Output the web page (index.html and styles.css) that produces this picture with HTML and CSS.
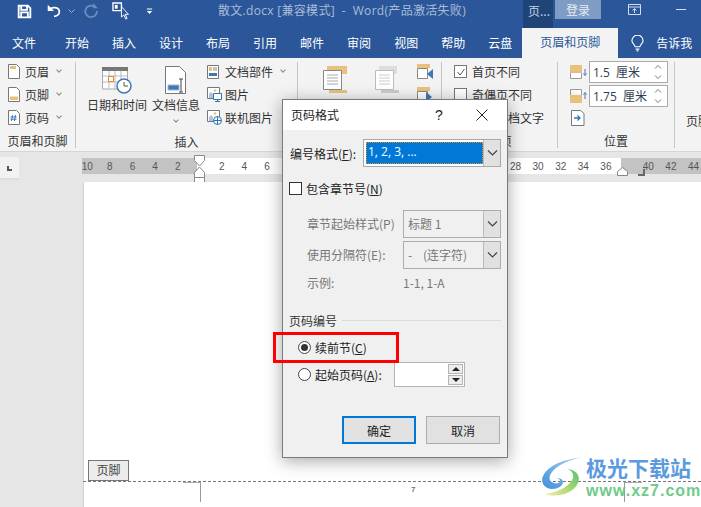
FILE: index.html
```html
<!DOCTYPE html>
<html lang="zh">
<head>
<meta charset="utf-8">
<title>散文.docx</title>
<link rel="stylesheet" href="styles.css">
</head>
<body>
<div class="app">
  <header class="titlebar">
    <div class="qat">
      <svg class="qi" width="15" height="15" viewBox="0 0 18 18"><path d="M2 2h11l3 3v11H2z M5 2v5h7V2 M5 16v-6h8v6" fill="none" stroke="#fff" stroke-width="2.200"/></svg>
      <svg class="qi qi-undo" width="16" height="16" viewBox="0 0 18 18"><path d="M3 8c3-4 12-4 12 2 0 3-3 5-6 5" fill="none" stroke="#fff" stroke-width="2"/><path d="M2 2v7h7z" fill="#fff"/></svg>
      <svg class="qchev" width="7" height="5" viewBox="0 0 7 5"><path d="M.5.500l3 3 3-3" fill="none" stroke="#9db4d4"/></svg>
      <svg class="qi qi-redo" width="15" height="16" viewBox="0 0 16 18"><path d="M11 4a6.500 6.500 0 1 0 3 5" fill="none" stroke="#6f8db8" stroke-width="2"/><path d="M10 0v6h5z" fill="#6f8db8"/></svg>
      <svg class="qi qi-touch" width="17" height="19" viewBox="0 0 18 20"><path d="M1 1h9v8H1z" fill="none" stroke="#fff" stroke-width="1.400"/><path d="M3 3h3v4H3z" fill="#fff"/><path d="M10 5v11l2.500-2.500 2 4.500 1.500-.7-2-4.300h3.500z" fill="#2b579a" stroke="#fff"/></svg>
      <svg class="qi qi-more" width="7" height="8" viewBox="0 0 8 8"><path d="M1 1h6v1.200H1z M1 4h6L4 7.500z" fill="#fff"/></svg>
    </div>
    <div class="doc-title">散文.docx [兼容模式]  -  Word(产品激活失败)</div>
    <div class="title-tab">页...</div>
    <div class="login">登录</div>
    <div class="winctl">
      <svg width="13" height="11" viewBox="0 0 13 11"><path d="M.5.500h12v10H.5z M.5 3h12 M6.500 9V5 M4.500 6.500l2-2 2 2" fill="none" stroke="#d5deec"/></svg>
      <span class="minimize"></span>
    </div>
  </header>

  <nav class="tabs">
    <span>文件</span><span class="tab-second">开始</span><span>插入</span><span>设计</span><span>布局</span><span>引用</span><span>邮件</span><span>审阅</span><span>视图</span><span>帮助</span><span>云盘</span>
    <span class="tab-active">页眉和页脚</span>
    <svg class="bulb" width="13" height="17" viewBox="0 0 14 18"><path d="M4.500 12.500C4 9.500 1 9 1 6a6 6 0 0 1 12 0c0 3-3 3.500-3.500 6.500z M5 15h4 M6 17h2" fill="none" stroke="#fff" stroke-width="1.200"/></svg>
    <span class="tell">告诉我</span>
  </nav>

  <section class="ribbon">
    <div class="group g1">
      <div class="stack">
        <div class="ri"><svg width="12" height="15" viewBox="0 0 12 15"><path d="M.5.500h8l3 3v11H.5z" fill="#fff" stroke="#777"/><path d="M2 2h6v3H2z" fill="#e8c27c"/></svg><span>页眉</span><i class="chev"></i></div>
        <div class="ri"><svg width="12" height="15" viewBox="0 0 12 15"><path d="M.5.500h8l3 3v11H.5z" fill="#fff" stroke="#777"/><path d="M2 9.500h8V13H2z" fill="#e8c27c"/></svg><span>页脚</span><i class="chev"></i></div>
        <div class="ri"><svg width="12" height="15" viewBox="0 0 12 15"><path d="M.5.500h8l3 3v11H.5z" fill="#fff" stroke="#777"/><path d="M4.500 5L3.500 11M7.500 5L6.500 11M2.500 7h6M2.500 9.200h6" stroke="#3f78b5" fill="none"/></svg><span>页码</span><i class="chev"></i></div>
      </div>
      <div class="glabel">页眉和页脚</div>
    </div>
    <div class="group g2">
      <div class="g2-body">
        <div class="big big-date">
          <svg width="30" height="28" viewBox="0 0 30 28"><path d="M.5 1h25v21H.5z" fill="#fff" stroke="#aaa"/><path d="M0 0h26v4H0z" fill="#777"/><path d="M7 4v18M13 4v18M19 4v18M1 9h24M1 15h24" stroke="#bbb"/><path d="M6.500 9.500h5v5h-5z" fill="#fff" stroke="#e8872c"/><circle cx="22" cy="19" r="7" fill="#fff" stroke="#3f78b5" stroke-width="1.500"/><path d="M22 15v4h4" fill="none" stroke="#555"/></svg>
          <span>日期和时间</span>
        </div>
        <div class="big big-info">
          <svg width="22" height="29" viewBox="0 0 22 29"><path d="M.5.500h14l6 6v21H.5z" fill="#fff" stroke="#777"/><path d="M3 19h11v5H3z" fill="#3f78b5" stroke="#9cb6d6"/><path d="M14 13h4M14 26h4M16 13v13" stroke="#444" fill="none"/></svg>
          <span>文档信息</span>
          <i class="chev"></i>
        </div>
        <div class="stack stack-ins">
          <div class="ri"><svg width="12" height="14" viewBox="0 0 12 14"><path d="M.5.500h11v13H.5z" fill="#fff" stroke="#777"/><path d="M2 2h3v4H2z" fill="#e8c27c"/><path d="M2 8h8v3H2z" fill="#3f78b5"/><path d="M6 3h4M6 5h4" stroke="#888"/></svg><span>文档部件</span><i class="chev"></i></div>
          <div class="ri"><svg width="15" height="15" viewBox="0 0 15 15"><path d="M.5.500h12v11H.5z" fill="#fff" stroke="#777"/><circle cx="8" cy="3.500" r="1.300" fill="#e8c27c"/><path d="M2 11V7l2-2 2 2v4z" fill="#a9c3e0"/><path d="M6.500 6.500h8v6h-8z" fill="#fff" stroke="#2f74b5"/><path d="M10.500 12.500v2M8 14.500h5" stroke="#2f74b5"/></svg><span>图片</span></div>
          <div class="ri"><svg width="15" height="15" viewBox="0 0 15 15"><path d="M.5.500h12v11H.5z" fill="#fff" stroke="#777"/><circle cx="8" cy="3.500" r="1.300" fill="#e8c27c"/><path d="M2 11V7l2-2 2 2v4z" fill="#a9c3e0"/><circle cx="10.500" cy="10.500" r="4" fill="#fff" stroke="#2f74b5"/><path d="M6.500 10.500h8M10.500 6.500v8" stroke="#2f74b5"/></svg><span>联机图片</span></div>
        </div>
      </div>
      <div class="glabel">插入</div>
    </div>
    <div class="group g3">
      <div class="g3-body">
        <svg width="24" height="28" viewBox="0 0 24 28"><path d="M4 0h20v8H4z" fill="#e8c27c"/><path d="M.5 4.500h18v19H.5z" fill="#fff" stroke="#888"/><path d="M4 9h11M4 12h11M4 15h11M4 18h11" stroke="#aaa"/><path d="M6 24h18v3H6z" fill="#e8c27c"/></svg>
        <svg class="dim" width="24" height="28" viewBox="0 0 24 28"><path d="M4 0h18v8H4z" fill="#ddd"/><path d="M.5 4.500h18v19H.5z" fill="#fff" stroke="#bbb"/><path d="M4 9h11M4 12h11M4 15h11M4 18h11" stroke="#ccc"/><path d="M6 24h18v3H6z" fill="#ccc"/></svg>
        <div class="g3-nav">
          <svg width="16" height="18" viewBox="0 0 16 18"><path d="M0 0h13v4H0z" fill="#e8c27c"/><path d="M.5 4.500h10v10H.5z" fill="#fff" stroke="#888"/><path d="M16 5v10l-6-5z" fill="#3f78b5"/></svg>
          <svg width="16" height="18" viewBox="0 0 16 18"><path d="M0 0h13v4H0z" fill="#e8c27c"/><path d="M.5 4.500h10v10H.5z" fill="#fff" stroke="#888"/><path d="M9 5v10l6-5z" fill="#3f78b5"/></svg>
        </div>
      </div>
    </div>
    <div class="group g4">
      <div class="stack stack-opt">
        <div class="ri"><span class="cb"><svg width="12" height="12" viewBox="0 0 12 12"><path d="M2.500 6l2.500 3 4.500-6" fill="none" stroke="#555"/></svg></span><span>首页不同</span></div>
        <div class="ri"><span class="cb"></span><span>奇偶页不同</span></div>
        <div class="ri"><span class="cb cb-hidden"></span><span>显示文档文字</span></div>
      </div>
      <div class="glabel">选项</div>
    </div>
    <div class="group g5">
      <div class="pos">
        <div class="pos-row">
          <svg width="17" height="14" viewBox="0 0 17 14"><path d="M0 0h12v8H0z" fill="#e8c27c"/><path d="M0 8h12" stroke="#d99" stroke-dasharray="1 1"/><path d="M.5 8v5.500h11V8" fill="#fff" stroke="#999"/><path d="M15 4v6M13.500 8.500L15 10.500l1.500-2" stroke="#3f78b5" fill="none"/></svg>
          <div class="spin"><span>1.5&nbsp;&nbsp;厘米</span><svg width="8" height="16" viewBox="0 0 8 16"><path d="M1 4.500l3-3 3 3M1 11.500l3 3 3-3" fill="none" stroke="#777"/></svg></div>
        </div>
        <div class="pos-row">
          <svg width="17" height="14" viewBox="0 0 17 14"><path d="M.5.500h11V6" fill="#fff" stroke="#999"/><path d="M.5.500V6" stroke="#999"/><path d="M0 6h12v8H0z" fill="#e8c27c"/><path d="M15 4v6M13.500 5.500L15 3.500l1.500 2" stroke="#3f78b5" fill="none"/></svg>
          <div class="spin"><span>1.75&nbsp;&nbsp;厘米</span><svg width="8" height="16" viewBox="0 0 8 16"><path d="M1 4.500l3-3 3 3M1 11.500l3 3 3-3" fill="none" stroke="#777"/></svg></div>
        </div>
        <svg class="pos-ico" width="14" height="16" viewBox="0 0 14 16"><path d="M.5.500h9l3.500 3v12H.5z" fill="#fff" stroke="#777"/><path d="M3 8h6M6.500 5.500L9 8l-2.500 2.500" stroke="#2f74b5" fill="none" stroke-width="1.300"/></svg>
      </div>
      <div class="glabel">位置</div>
    </div>
    <div class="group g6"><span>页脚</span></div>
  </section>

  <div class="rulerbar">
    <div class="corner"><span class="corner-l"></span></div>
    <div class="ruler">
      <div class="r-seg r-gray r-left"><span>10</span><span>8</span><span>6</span><span>4</span><span>2</span></div>
      <div class="r-seg r-white"><span>2</span><span>4</span><span>6</span><span>8</span><span>10</span><span>12</span><span>14</span><span>16</span><span>18</span><span>20</span><span>22</span><span>24</span><span>26</span><span>28</span><span>30</span><span>32</span><span>34</span><span>36</span></div>
      <div class="r-seg r-gray r-right"><span>40</span><span>42</span><span>44</span></div>
    </div>
    <svg class="m-hour" width="12" height="28" viewBox="0 0 12 28"><path d="M.5.500h10v5L5.500 11 .5 5.500z M5.500 12l5 5.500v5h-10v-5z M.5 22.500h10v5H.5z" fill="#fff" stroke="#888"/></svg>
    <svg class="m-right" width="11" height="9" viewBox="0 0 11 9"><path d="M.5 4.500l5-4 5 4v4H.5z" fill="#fff" stroke="#888"/></svg>
    <span class="m-corner"></span>
  </div>

  <main class="workspace">
    <div class="page">
      <div class="footer-tag">页脚</div>
      <div class="footer-area">
        <div class="crop crop-l"></div>
        <div class="pagenum">7</div>
        <div class="crop crop-r"></div>
      </div>
    </div>
  </main>
</div>

<div class="dialog">
  <div class="d-title"><span class="d-name">页码格式</span><span class="d-help">?</span>
    <svg class="d-close" width="12" height="12" viewBox="0 0 12 12"><path d="M.5.500l11 11M11.500.500l-11 11" stroke="#222" fill="none"/></svg>
  </div>
  <div class="d-body">
    <div class="d-row d-fmt">
      <label>编号格式(<u>F</u>):</label>
      <div class="select sel-main"><span class="sel-val"><span class="sel-focus">1, 2, 3, ...</span></span><span class="sel-btn"><svg width="11" height="6" viewBox="0 0 11 6"><path d="M1 .5l4.500 4.500L10 .5" fill="none" stroke="#444" stroke-width="1.200"/></svg></span></div>
    </div>
    <div class="d-check"><span class="d-cb"></span><span>包含章节号(<u>N</u>)</span></div>
    <div class="d-sub">
      <div class="d-row d-dis"><label>章节起始样式(P)</label>
        <div class="select sel-sub"><span class="sel-val">标题 1</span><span class="sel-btn"><svg width="11" height="6" viewBox="0 0 11 6"><path d="M1 .5l4.500 4.500L10 .5" fill="none" stroke="#444" stroke-width="1.200"/></svg></span></div></div>
      <div class="d-row d-dis"><label>使用分隔符(E):</label>
        <div class="select sel-sub"><span class="sel-val">-&nbsp;&nbsp;&nbsp;&nbsp;(连字符)</span><span class="sel-btn"><svg width="11" height="6" viewBox="0 0 11 6"><path d="M1 .5l4.500 4.500L10 .5" fill="none" stroke="#444" stroke-width="1.200"/></svg></span></div></div>
      <div class="d-row d-dis d-ex"><label>示例:</label><span>1-1, 1-A</span></div>
    </div>
    <div class="d-legend"><span>页码编号</span><i></i></div>
    <div class="d-radio d-r1"><span class="radio radio-on"></span><span>续前节(<u>C</u>)</span></div>
    <div class="d-radio d-r2"><span class="radio"></span><span>起始页码(<u>A</u>):</span>
      <div class="d-num"><span class="d-num-f"></span><span class="d-num-b"><b class="up"></b><b class="dn"></b></span></div>
    </div>
    <div class="d-btns"><button class="btn btn-ok">确定</button><button class="btn">取消</button></div>
  </div>
</div>
<div class="redbox"></div>

<div class="wm">
  <svg class="wm-logo" width="42" height="42" viewBox="0 0 42 42">
    <defs>
      <linearGradient id="wa" x1="0" y1="1" x2="1" y2="0"><stop offset="0" stop-color="#3f8fdc"/><stop offset=".7" stop-color="#8cc0ec"/><stop offset="1" stop-color="#e9dccb"/></linearGradient>
      <linearGradient id="wb" x1="0" y1="1" x2="1" y2="0"><stop offset="0" stop-color="#f3ecb0"/><stop offset=".5" stop-color="#a8d86a"/><stop offset="1" stop-color="#4fc07a"/></linearGradient>
    </defs>
    <path d="M42 1C25 3 8 8 2 20c-3 7 2 13 9 13 6 0 11-3 11-7 0-3-4-5-8-3 3-1 5 0 5 2 0 2-3 3-6 2-5-1-6-6-2-11C16 9 28 4 42 1z" fill="url(#wa)"/>
    <path d="M4 38c12 4 28 0 33-11 3-7-2-13-10-14 4 2 6 5 5 9-2 7-13 14-28 16z" fill="url(#wb)"/>
  </svg>
  <div class="wm-text"><div class="wm-cn">极光下载站</div><div class="wm-en">www.xz7.com</div></div>
</div>
</body>
</html>
```
FILE: styles.css
```css
* { box-sizing: border-box; }
html, body { margin: 0; padding: 0; }
body {
  width: 701px; height: 507px; overflow: hidden; position: relative;
  font-family: "Noto Sans CJK SC", "Noto Sans", sans-serif;
  font-size: 12px; color: #333; background: #e6e6e6;
}
.app { display: flex; flex-direction: column; height: 507px; }

.titlebar { height: 28px; background: #2b579a; display: flex; align-items: flex-start; flex: none; }
.qat { width: 218px; flex: none; display: flex; align-items: center; height: 22px; padding-left: 17px; }
.qi { flex: none; display: block; }
.qi-undo { margin-left: 14px; }
.qchev { flex: none; margin-left: 6px; }
.qi-redo { margin-left: 9px; }
.qi-touch { margin-left: 13px; }
.qi-more { margin-left: 17px; }
.doc-title { width: 305px; flex: none; color: #a9bcd8; font-family: "Open Sans", "Noto Sans CJK SC", sans-serif; font-size: 12px; letter-spacing: .3px; line-height: 22px; white-space: pre; }
.title-tab { width: 30px; height: 28px; flex: none; background: #1f4478; color: #c5d2e5; line-height: 22px; padding-left: 5px; font-size: 12px; }
.login { width: 46px; height: 19px; margin-left: 2px; flex: none; background: #7f9cc4; color: #e4ebf5; text-align: center; line-height: 19px; font-size: 12px; }
.winctl { display: flex; align-items: center; margin-left: 27px; height: 18px; }
.minimize { display: block; width: 10px; height: 1px; background: #d5deec; margin-left: 35px; }

.tabs { height: 30px; background: #2b579a; display: flex; align-items: center; padding-left: 12px; gap: 23px; color: #fff; flex: none; font-size: 12px; }
.tabs span { line-height: 28px; white-space: nowrap; }
.tabs .tab-second { margin-left: 6px; }
.tabs .tab-active { margin-left: -13px; width: 96px; height: 30px; background: #f3f3f3; color: #2b579a; text-align: center; line-height: 28px; margin-right: -10px; }
.bulb { flex: none; }
.tabs .tell { margin-left: -11px; }

.ribbon { height: 94px; background: #f3f3f3; border-bottom: 1px solid #d5d5d5; display: flex; flex: none; padding-top: 4px; }
.group { position: relative; display: flex; flex-direction: column; border-right: 1px solid #c6c6c6; height: 86px; flex: none; }
.g1 { width: 76px; }
.g2 { width: 222px; }
.g3 { width: 144px; }
.g4 { width: 116px; }
.g5 { width: 117px; }
.g6 { border: 0; width: 26px; padding: 50px 0 0 11px; white-space: nowrap; }
.stack { display: flex; flex-direction: column; gap: 0; height: 73px; margin-top: -2px; }
.ri { display: flex; align-items: center; height: 23px; white-space: nowrap; }
.ri svg { flex: none; }
.g1 .ri { padding-left: 8px; }
.g1 .ri span { margin-left: 5px; }
.chev { display: block; flex: none; width: 4px; height: 4px; border-right: 1px solid #888; border-bottom: 1px solid #888; transform: rotate(45deg); margin: -3px 0 0 8px; }
.glabel { text-align: center; line-height: 14px; height: 14px; margin-top: 2px; white-space: nowrap; }

.g2-body { display: flex; height: 71px; }
.big { display: flex; flex-direction: column; align-items: center; flex: none; white-space: nowrap; }
.big svg { flex: none; margin-top: 5px; }
.big span { line-height: 16px; margin-top: 2px; }
.big-date { width: 60px; margin-left: 11px; }
.big-info { width: 48px; margin-left: 5px; }
.big-info svg { margin-top: 4px; }
.big-info .chev { margin: 5px 0 0; }
.stack-ins { margin-left: 7px; }
.stack-ins .ri span { margin-left: 3px; }
.stack-ins .ri:first-child span { margin-left: 6px; }

.g3-body { display: flex; align-items: flex-start; padding: 4px 0 0 25px; height: 71px; }
.g3-body .dim { margin-left: 28px; }
.g3-nav { display: flex; flex-direction: column; gap: 5px; margin-left: 18px; margin-top: -2px; }

.stack-opt { padding-left: 12px; }
.stack-opt .ri span:last-child { margin-left: 5px; }
.cb { width: 13px; height: 13px; background: #fff; border: 1px solid #777; display: block; flex: none; }
.cb svg { display: block; }
.cb-hidden { visibility: hidden; }

.pos { display: flex; flex-direction: column; height: 73px; margin-top: -2px; padding-left: 12px; }
.pos-row { display: flex; align-items: center; gap: 2px; height: 24px; }
.pos-row svg { flex: none; }
.spin { width: 79px; height: 22px; background: #fff; border: 1px solid #ababab; display: flex; align-items: center; justify-content: space-between; padding: 0 5px 0 3px; font-family: "Open Sans", "Noto Sans CJK SC", sans-serif; font-size: 12px; color: #2f4050; white-space: nowrap; }
.pos-ico { margin-left: 1px; margin-top: 2px; flex: none; }

.rulerbar { height: 30px; flex: none; background: #e6e6e6; position: relative; display: flex; padding-top: 5px; }
.corner { width: 19px; height: 23px; background: #f2f2f2; border-bottom: 2px solid #ddd; position: relative; flex: none; }
.corner-l { display: block; position: absolute; left: 7px; top: 9px; width: 5px; height: 5px; border-left: 2px solid #555; border-bottom: 2px solid #555; }
.ruler { margin-left: 63px; height: 16px; display: flex; margin-top: 1px; font-family: "Liberation Sans", sans-serif; font-size: 10px; color: #555; }
.r-seg { display: flex; height: 16px; align-items: center; }
.r-seg span { width: 22.600px; text-align: center; flex: none; }
.r-gray { background: #c3c3c3; }
.r-left { width: 115px; }
.r-left span:first-child { margin-left: -6px; }
.r-white { width: 424px; background: #fff; padding-left: 13.500px; }
.r-right { width: 80px; padding-left: 16px; }
.m-hour { position: absolute; left: 194px; top: 3px; }
.m-right { position: absolute; left: 617px; top: 15px; }
.m-corner { position: absolute; left: 638px; top: 17px; width: 7px; height: 7px; border-right: 2px solid #666; border-bottom: 2px solid #666; }

.workspace { flex: 1; padding-left: 83px; min-height: 0; }
.page { height: 100%; background: #fff; border-left: 1px solid #d0d0d0; padding: 278px 0 0 4px; position: relative; }
.footer-tag { width: 41px; height: 21px; background: #ececec; border: 1px solid #777; text-align: center; line-height: 18px; color: #444; }
.footer-area { margin-left: -5px; height: 26px; border-top: 1px dashed #777; display: flex; }
.crop { height: 20px; width: 18px; border-top: 1px solid #aaa; flex: none; }
.crop-l { margin-left: 100px; border-right: 1px solid #999; }
.crop-r { margin-left: 205px; border-left: 1px solid #999; }
.pagenum { width: 8px; margin-left: 210px; padding-top: 2px; font-family: "Liberation Sans", sans-serif; font-size: 8px; line-height: 12px; color: #333; }

.dialog { position: absolute; left: 282px; top: 99px; width: 226px; height: 359px; background: #f0f0f0; border: 1px solid #7a7a7a; box-shadow: 0 3px 16px rgba(0,0,0,.35); }
.d-title { height: 30px; background: #fff; display: flex; align-items: center; padding-left: 8px; position: relative; color: #222; }
.d-name { line-height: 28px; width: 144px; margin-top: -1px; }
.d-help { font-size: 14px; width: 28px; font-family: "Liberation Sans", sans-serif; }
.d-close { margin-left: 13px; }
.d-body { padding: 9px 6px 0 6px; }
.d-row { display: flex; align-items: center; height: 28px; }
.d-fmt label { width: 74px; margin-left: 1px; color: #222; white-space: nowrap; }
.select { display: flex; height: 100%; border: 1px solid #a9a9a9; flex: none; }
.sel-main { width: 138px; }
.sel-sub { width: 98px; }
.sel-val { flex: 1; background: #fff; padding: 2px 0 2px 2px; display: flex; min-width: 0; white-space: nowrap; font-size: 12px; }
.sel-focus { flex: 1; background: #0078d7; color: #fff; padding-left: 2px; line-height: 20px; outline: 1px dotted #e88a1a; outline-offset: -1px; font-family: "Open Sans", sans-serif; }
.sel-btn { width: 17px; flex: none; background: #e1e1e1; display: flex; align-items: center; justify-content: center; border-left: 1px solid #bbb; }
.d-check { display: flex; align-items: center; height: 15px; margin-top: 14px; gap: 4px; color: #222; }
.d-cb { width: 13px; height: 13px; background: #fff; border: 1px solid #333; display: block; flex: none; }
.d-sub { padding-left: 18px; margin-top: 14px; display: flex; flex-direction: column; gap: 3px; color: #777; }
.d-dis { height: 28px; }
.d-dis label { width: 96px; white-space: nowrap; margin-top: -1px; }
.d-dis .sel-val { background: #f0f0f0; color: #777; padding: 0 0 2px 4px; align-items: center; }
.d-dis .select { border-color: #adadad; }
.d-ex { height: 17px; margin-top: 2px; }
.d-legend { display: flex; align-items: center; margin-top: 21px; height: 16px; color: #333; }
.d-legend span { width: 53px; white-space: nowrap; }
.d-legend i { flex: 1; height: 1px; background: #dcdcdc; }
.d-radio { display: flex; align-items: center; gap: 4px; padding-left: 9px; color: #222; white-space: nowrap; }
.d-r1 { height: 16px; margin-top: 11px; }
.d-r2 { height: 26px; margin-top: 6px; }
.radio { width: 13px; height: 13px; border-radius: 50%; background: #fff; border: 1px solid #444; display: block; position: relative; flex: none; }
.radio-on::after { content: ""; position: absolute; left: 2px; top: 2px; width: 7px; height: 7px; border-radius: 50%; background: #333; }
.d-num { width: 71px; height: 25px; margin-left: 8px; background: #fff; border: 1px solid #b4b4b4; display: flex; }
.d-num-f { flex: 1; }
.d-num-b { width: 17px; display: flex; flex-direction: column; gap: 1px; background: #fff; padding: 1px; }
.d-num-b b { flex: 1; background: #ececec; border: 1px solid #b4b4b4; position: relative; display: block; }
.d-num-b b::after { content: ""; position: absolute; left: 3px; width: 0; height: 0; border-left: 4px solid transparent; border-right: 4px solid transparent; }
.d-num-b .up::after { top: 2px; border-bottom: 4px solid #222; }
.d-num-b .dn::after { top: 2px; border-top: 4px solid #222; }
.d-btns { display: flex; gap: 10px; justify-content: flex-end; margin-top: 29px; padding-right: 1px; }
.btn { width: 74px; height: 28px; background: #e1e1e1; border: 1px solid #adadad; font: inherit; color: #222; padding: 0; }
.btn-ok { border: 2px solid #0078d7; }

.redbox { position: absolute; left: 273px; top: 332px; width: 126px; height: 31px; border: 3px solid #f00; }

.wm { position: absolute; left: 541px; top: 456px; display: flex; gap: 3px; }
.wm-logo { flex: none; }
.wm-cn { font-size: 21px; font-weight: 700; line-height: 22px; color: #5a9ade; white-space: nowrap; }
.wm-en { font-family: "Liberation Sans", sans-serif; font-weight: 700; font-size: 16px; letter-spacing: 1px; line-height: 18px; margin-top: 4px; color: #6fcb87; white-space: nowrap; }
```
